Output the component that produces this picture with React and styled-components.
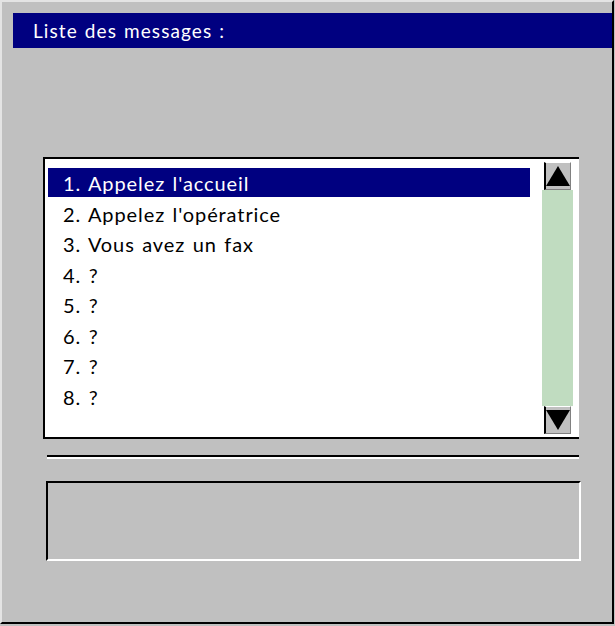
import React from 'react';
import styled, { createGlobalStyle } from 'styled-components';

const GlobalStyle = createGlobalStyle`
  html, body {
    margin: 0;
    padding: 0;
    background: #c0c0c0;
  }
  * {
    box-sizing: border-box;
  }
`;

const Frame = styled.div`
  width: 614px;
  height: 624px;
  background: #c0c0c0;
  border-left: 2px solid #e4e4e4;
  border-top: 2px solid #e4e4e4;
  border-right: 2px solid #000;
  border-bottom: 2px solid #000;
  padding-top: 11px;
  display: flex;
  flex-direction: column;
  font-family: Lato, "Noto Sans", sans-serif;
`;

const TitleBar = styled.div`
  height: 35px;
  margin: 0 0 0 11px;
  background: #000080;
  color: #fff;
  font-size: 19px;
  letter-spacing: 1.1px;
  word-spacing: 1px;
  line-height: 35px;
  padding-left: 20px;
`;

const ListBox = styled.div`
  margin: 109px 0 0 41px;
  width: 536px;
  height: 282px;
  background: #fff;
  border-left: 2px solid #000;
  border-top: 2px solid #000;
  border-bottom: 2px solid #000;
  display: flex;
`;

const Items = styled.ul`
  list-style: none;
  margin: 0;
  padding: 9px 0 0 3px;
  width: 485px;
`;

const Item = styled.li`
  line-height: 30px;
  padding-left: 15px;
  font-size: 20px;
  letter-spacing: 0.9px;
  word-spacing: 1.5px;
  color: ${p => (p.$selected ? '#fff' : '#000')};
  background: ${p => (p.$selected ? '#000080' : 'transparent')};
  height: ${p => (p.$selected ? '29px' : '30.5px')};
  margin-bottom: ${p => (p.$selected ? '1.5px' : '0')};
  white-space: nowrap;
`;

const ScrollBar = styled.div`
  margin-left: 12px;
  width: 31px;
  padding: 3px 0;
  display: flex;
  flex-direction: column;
`;

const Track = styled.div`
  flex: 1;
  background: #c0dcc0;
`;

const Arrow = styled.div`
  width: 27px;
  height: 28px;
  margin-left: 2px;
  background: #c0c0c0;
  border-top: 1px solid #fff;
  border-left: 2px solid #000;
  border-right: 1px solid #808080;
  border-bottom: 1px solid #808080;
  display: flex;
  align-items: center;
  justify-content: center;
  svg {
    display: block;
  }
`;

const Separator = styled.div`
  margin: 16px 0 0 45px;
  width: 532px;
  height: 4px;
  border-top: 2px solid #000;
  border-bottom: 2px solid #fff;
`;

const MessageBox = styled.div`
  margin: 22px 0 0 44px;
  width: 535px;
  height: 80px;
  border-left: 2px solid #000;
  border-top: 2px solid #000;
  border-right: 2px solid #fff;
  border-bottom: 2px solid #fff;
`;

const messages = [
  "1. Appelez l'accueil",
  "2. Appelez l'opératrice",
  '3. Vous avez un fax',
  '4. ?',
  '5. ?',
  '6. ?',
  '7. ?',
  '8. ?',
];

const Triangle = ({ down }) => (
  <svg width="24" height="22" viewBox="0 0 24 22">
    {down ? (
      <polygon points="0,1 24,1 12,21" fill="#000" />
    ) : (
      <polygon points="12,1 24,21 0,21" fill="#000" />
    )}
  </svg>
);

export default function App() {
  return (
    <>
      <GlobalStyle />
      <Frame>
        <TitleBar>Liste des messages :</TitleBar>
        <ListBox>
          <Items>
            {messages.map((m, i) => (
              <Item key={m} $selected={i === 0}>{m}</Item>
            ))}
          </Items>
          <ScrollBar>
            <Arrow><Triangle /></Arrow>
            <Track />
            <Arrow><Triangle down /></Arrow>
          </ScrollBar>
        </ListBox>
        <Separator />
        <MessageBox />
      </Frame>
    </>
  );
}
